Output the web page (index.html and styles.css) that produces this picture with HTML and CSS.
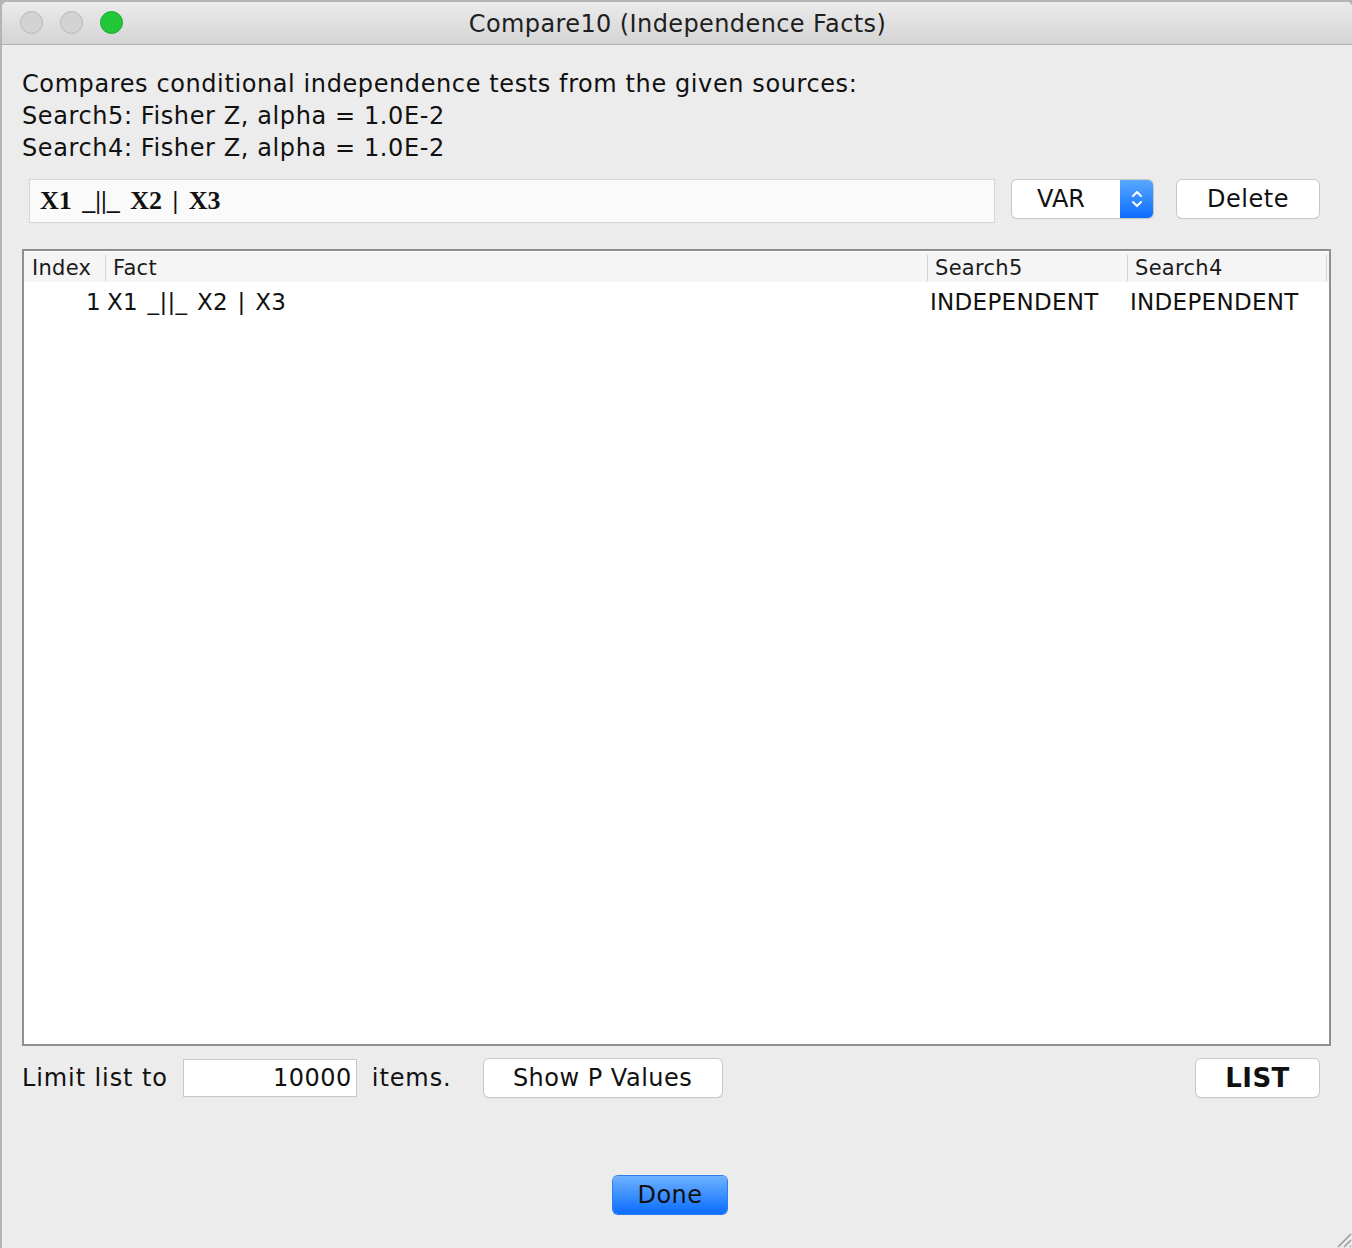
FILE: index.html
```html
<!DOCTYPE html>
<html>
<head>
<meta charset="utf-8">
<link rel="stylesheet" href="styles.css">
</head>
<body>
<div class="desktop">
  <div class="window">
    <div class="titlebar">
      <div class="lights">
        <span class="light off"></span>
        <span class="light off"></span>
        <span class="light on"></span>
      </div>
      <div class="title">Compare10 (Independence Facts)</div>
    </div>
    <div class="content">
      <div class="desc">
        <div>Compares conditional independence tests from the given sources:</div>
        <div>Search5: Fisher Z, alpha = 1.0E-2</div>
        <div>Search4: Fisher Z, alpha = 1.0E-2</div>
      </div>
      <div class="factrow">
        <div class="factfield">X1 _||_ X2 | X3</div>
        <div class="combo">
          <span class="combo-text">VAR</span>
          <span class="combo-arrow">
            <svg width="14" height="26" viewBox="0 0 14 26"><path d="M3 10 L7 6 L11 10" fill="none" stroke="#fff" stroke-width="2" stroke-linecap="round" stroke-linejoin="round"/><path d="M3 16 L7 20 L11 16" fill="none" stroke="#fff" stroke-width="2" stroke-linecap="round" stroke-linejoin="round"/></svg>
          </span>
        </div>
        <button class="btn delete">Delete</button>
      </div>
      <div class="table">
        <div class="thead">
          <div class="th c-index">Index</div>
          <div class="th c-fact">Fact</div>
          <div class="th c-s5">Search5</div>
          <div class="th c-s4">Search4</div>
          <div class="th c-end"></div>
        </div>
        <div class="trow">
          <div class="td c-index num">1</div>
          <div class="td c-fact">X1 _||_ X2 | X3</div>
          <div class="td c-s5">INDEPENDENT</div>
          <div class="td c-s4">INDEPENDENT</div>
        </div>
      </div>
      <div class="bottomrow">
        <span class="lbl">Limit list to</span>
        <div class="limitfield">10000</div>
        <span class="lbl items">items.</span>
        <button class="btn showp">Show P Values</button>
        <div class="spacer"></div>
        <button class="btn list">LIST</button>
      </div>
      <div class="donerow">
        <button class="btn done">Done</button>
      </div>
    </div>
    <svg class="grip" width="22" height="22" viewBox="0 0 22 22">
      <path d="M21 8 L8 21 M21 14 L14 21 M21 20 L20 21" stroke="#9a9a9a" stroke-width="1.5"/>
    </svg>
  </div>
</div>
</body>
</html>
```
FILE: styles.css
```css
html, body {
  margin: 0;
  padding: 0;
}
body {
  width: 1352px;
  height: 1248px;
  overflow: hidden;
  background: #b4b4b4;
  font-family: "DejaVu Sans", "Lucida Grande", sans-serif;
  color: #111;
}
.desktop {
  padding: 2px 0 0 2px;
  height: 1246px;
}
.window {
  position: relative;
  width: 1350px;
  height: 1246px;
  background: #ececec;
  display: flex;
  flex-direction: column;
  border-top-left-radius: 5px;
  border-top-right-radius: 5px;
  overflow: hidden;
}
.titlebar {
  background: linear-gradient(#ebebeb, #d4d4d4);
  border-bottom: 1px solid #b1b1b1;
  position: relative;
  display: flex;
  align-items: center;
  justify-content: center;
  flex-shrink: 0;
  padding-top: 2px;
  box-sizing: border-box;
  height: 43px;
}
.lights {
  position: absolute;
  left: 18px;
  top: 9px;
  display: flex;
  gap: 17px;
}
.light {
  width: 23px;
  height: 23px;
  border-radius: 50%;
  box-sizing: border-box;
}
.light.off {
  background: #d3d3d3;
  border: 1px solid #b8b8b8;
}
.light.on {
  background: #22c83a;
  border: 1px solid #1aa82c;
}
.title {
  font-size: 24px;
  letter-spacing: 0.4px;
  color: #1e1e1e;
  margin-left: 1px;
}
.content {
  flex: 1;
  display: flex;
  flex-direction: column;
  padding: 23px 20px 0 20px;
}
.desc {
  font-size: 24px;
  letter-spacing: 0.6px;
  line-height: 32px;
  color: #111;
}
.factrow {
  display: flex;
  align-items: flex-start;
  margin-top: 15px;
  height: 44px;
}
.factfield {
  margin-left: 7px;
  width: 954px;
  height: 42px;
  background: #fafafa;
  border: 1px solid #d6d6d6;
  font-family: "Liberation Serif", serif;
  font-weight: bold;
  font-size: 26px;
  line-height: 42px;
  padding-left: 10px;
  box-sizing: content-box;
  word-spacing: 4px;
}
.combo {
  margin-left: 17px;
  margin-top: 1px;
  width: 141px;
  height: 38px;
  display: flex;
  border-radius: 5px;
  background: #fff;
  box-shadow: 0 0 0 1px #c8c8c8, 0 1px 1px rgba(0,0,0,0.15);
  overflow: hidden;
}
.combo-text {
  flex: 1;
  text-align: center;
  font-size: 24px;
  line-height: 38px;
  padding-right: 10px;
}
.combo-arrow {
  width: 33px;
  background: linear-gradient(#5aa9ff, #0a6cff);
  display: flex;
  align-items: center;
  justify-content: center;
}
.btn {
  font-family: "DejaVu Sans", "Lucida Grande", sans-serif;
  font-size: 24px;
  letter-spacing: 0.5px;
  color: #111;
  background: #fff;
  border: none;
  border-radius: 5px;
  box-shadow: 0 0 0 1px #c8c8c8, 0 1px 1px rgba(0,0,0,0.15);
  height: 38px;
  padding: 0;
  margin: 0;
}
.delete {
  margin-left: 24px;
  margin-top: 1px;
  width: 142px;
}
.table {
  margin-top: 26px;
  width: 1309px;
  height: 797px;
  box-sizing: border-box;
  border: 2px solid #8f8f8f;
  background: #fff;
  display: flex;
  flex-direction: column;
  padding-top: 1px;
}
.thead {
  display: flex;
  height: 30px;
  background: #f5f5f5;
  font-size: 21px;
  letter-spacing: 0.3px;
  color: #1a1a1a;
}
.th {
  box-sizing: border-box;
  padding-left: 7px;
  border-left: 1px solid #d4d4d4;
  height: 26px;
  line-height: 26px;
  margin-top: 3px;
}
.th.c-index {
  border-left: none;
  padding-left: 8px;
}
.c-index { width: 81px; flex-shrink: 0; }
.c-fact { width: 822px; flex-shrink: 0; }
.c-s5 { width: 200px; flex-shrink: 0; }
.c-s4 { width: 199px; flex-shrink: 0; }
.c-end { flex: 1; }
.trow {
  display: flex;
  height: 36px;
  line-height: 36px;
  font-size: 23px;
  letter-spacing: 0.3px;
  margin-top: 2px;
}
.td {
  box-sizing: border-box;
}
.td.num {
  text-align: right;
  padding-right: 4px;
}
.trow .c-fact { padding-left: 2px; word-spacing: 2px; }
.trow .c-s5 { padding-left: 3px; }
.trow .c-s4 { padding-left: 3px; }
.bottomrow {
  display: flex;
  align-items: center;
  margin-top: 12px;
  height: 40px;
}
.lbl {
  font-size: 24px;
  letter-spacing: 0.9px;
}
.limitfield {
  margin-left: 15px;
  width: 174px;
  height: 38px;
  box-sizing: border-box;
  border: 1px solid #c8c8c8;
  background: #fff;
  text-align: right;
  font-size: 24px;
  letter-spacing: 0.5px;
  line-height: 36px;
  padding-right: 4px;
}
.items {
  margin-left: 15px;
}
.showp {
  margin-left: 32px;
  width: 238px;
}
.spacer {
  flex: 1;
}
.list {
  width: 123px;
  font-weight: bold;
  font-size: 26px;
  margin-right: 13px;
}
.donerow {
  display: flex;
  justify-content: center;
  margin-top: 78px;
}
.done {
  width: 114px;
  background: linear-gradient(#6eb2ff, #0a6cff);
  box-shadow: 0 0 0 1px #2a7ef0, 0 1px 1px rgba(0,0,0,0.15);
  margin-right: 14px;
}
.grip {
  position: absolute;
  right: 0;
  bottom: 0;
}
```
